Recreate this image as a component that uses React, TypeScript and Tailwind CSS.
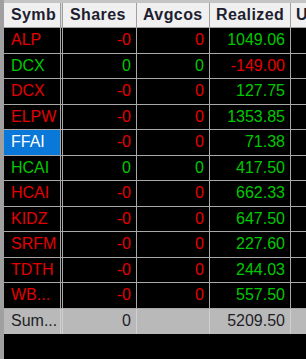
import React from "react";

type C = "r" | "g" | "w" | "k";
const RED = "text-[#e40000]";
const GREEN = "text-[#00c800]";

const colorCls = (c: C) =>
  c === "r" ? RED : c === "g" ? GREEN : c === "w" ? "text-white" : "text-[#1e1e28]";

const rows: { sym: string; sc: C; sh: string; shc: C; av: string; avc: C; re: string; rec: C; sel?: boolean }[] = [
  { sym: "ALP", sc: "r", sh: "-0", shc: "r", av: "0", avc: "r", re: "1049.06", rec: "g" },
  { sym: "DCX", sc: "g", sh: "0", shc: "g", av: "0", avc: "g", re: "-149.00", rec: "r" },
  { sym: "DCX", sc: "r", sh: "-0", shc: "r", av: "0", avc: "r", re: "127.75", rec: "g" },
  { sym: "ELPW", sc: "r", sh: "-0", shc: "r", av: "0", avc: "r", re: "1353.85", rec: "g" },
  { sym: "FFAI", sc: "w", sh: "-0", shc: "r", av: "0", avc: "r", re: "71.38", rec: "g", sel: true },
  { sym: "HCAI", sc: "g", sh: "0", shc: "g", av: "0", avc: "g", re: "417.50", rec: "g" },
  { sym: "HCAI", sc: "r", sh: "-0", shc: "r", av: "0", avc: "r", re: "662.33", rec: "g" },
  { sym: "KIDZ", sc: "r", sh: "-0", shc: "r", av: "0", avc: "r", re: "647.50", rec: "g" },
  { sym: "SRFM", sc: "r", sh: "-0", shc: "r", av: "0", avc: "r", re: "227.60", rec: "g" },
  { sym: "TDTH", sc: "r", sh: "-0", shc: "r", av: "0", avc: "r", re: "244.03", rec: "g" },
  { sym: "WB...", sc: "r", sh: "-0", shc: "r", av: "0", avc: "r", re: "557.50", rec: "g" },
];

export default function App() {
  return (
    <div
      className="w-[306px] h-[359px] bg-black flex overflow-hidden text-[16px] leading-none"
      style={{ fontFamily: '"Liberation Sans", Arial, sans-serif' }}
    >
      <div className="w-[4px] shrink-0 bg-[#a0a0a0]" />
      <div className="flex-1 flex flex-col min-w-0">
        <div className="h-[3px] bg-[#c4c4c4] shrink-0" />
        {/* header */}
        <div className="flex h-[25px] shrink-0 bg-[#f0f0f0] border-b border-[#a0a0a0] font-bold tracking-[0.4px] text-[#1e1e30]">
          <div className="w-[57px] shrink-0 flex items-center pl-[7px] border-r border-[#a0a0a0] overflow-hidden whitespace-nowrap">Symb</div>
          <div className="w-[2px] shrink-0 bg-[#d8d8d8] border-r border-[#a0a0a0]" />
          <div className="w-[74px] shrink-0 flex items-center pl-[7px] border-r border-[#a0a0a0] overflow-hidden whitespace-nowrap">Shares</div>
          <div className="w-[73px] shrink-0 flex items-center pl-[6px] border-r border-[#a0a0a0] overflow-hidden whitespace-nowrap">Avgcos</div>
          <div className="w-[81px] shrink-0 flex items-center pl-[6px] border-r border-[#a0a0a0] overflow-hidden whitespace-nowrap">Realized</div>
          <div className="flex-1 flex items-center pl-[5px] overflow-hidden whitespace-nowrap">U</div>
        </div>
        {rows.map((r, i) => (
          <div key={i} className="flex h-[25.5px] shrink-0 border-b border-[#a8a8a8]">
            <div
              className={`w-[57px] shrink-0 flex items-center pl-[7px] border-r border-[#a8a8a8] whitespace-nowrap ${
                r.sel ? "bg-[#0a78d8]" : ""
              } ${colorCls(r.sc)}`}
            >
              {r.sym}
            </div>
            <div className="w-[2px] shrink-0 border-r border-[#a8a8a8]" />
            <div className={`w-[74px] shrink-0 flex items-center justify-end pr-[5px] border-r border-[#a8a8a8] ${colorCls(r.shc)}`}>{r.sh}</div>
            <div className={`w-[73px] shrink-0 flex items-center justify-end pr-[5px] border-r border-[#a8a8a8] ${colorCls(r.avc)}`}>{r.av}</div>
            <div className={`w-[81px] shrink-0 flex items-center justify-end pr-[5px] border-r border-[#a8a8a8] ${colorCls(r.rec)}`}>{r.re}</div>
            <div className="flex-1" />
          </div>
        ))}
        {/* sum row */}
        <div className="flex h-[25.5px] shrink-0 bg-[#b9b9b9] text-[#1e1e28]">
          <div className="w-[57px] shrink-0 flex items-center pl-[7px] border-r border-[#d0d0d0] whitespace-nowrap">Sum...</div>
          <div className="w-[2px] shrink-0 border-r border-[#d0d0d0]" />
          <div className="w-[74px] shrink-0 flex items-center justify-end pr-[5px] border-r border-[#d0d0d0]">0</div>
          <div className="w-[73px] shrink-0 border-r border-[#d0d0d0]" />
          <div className="w-[81px] shrink-0 flex items-center justify-end pr-[5px] border-r border-[#d0d0d0]">5209.50</div>
          <div className="flex-1" />
        </div>
      </div>
    </div>
  );
}
